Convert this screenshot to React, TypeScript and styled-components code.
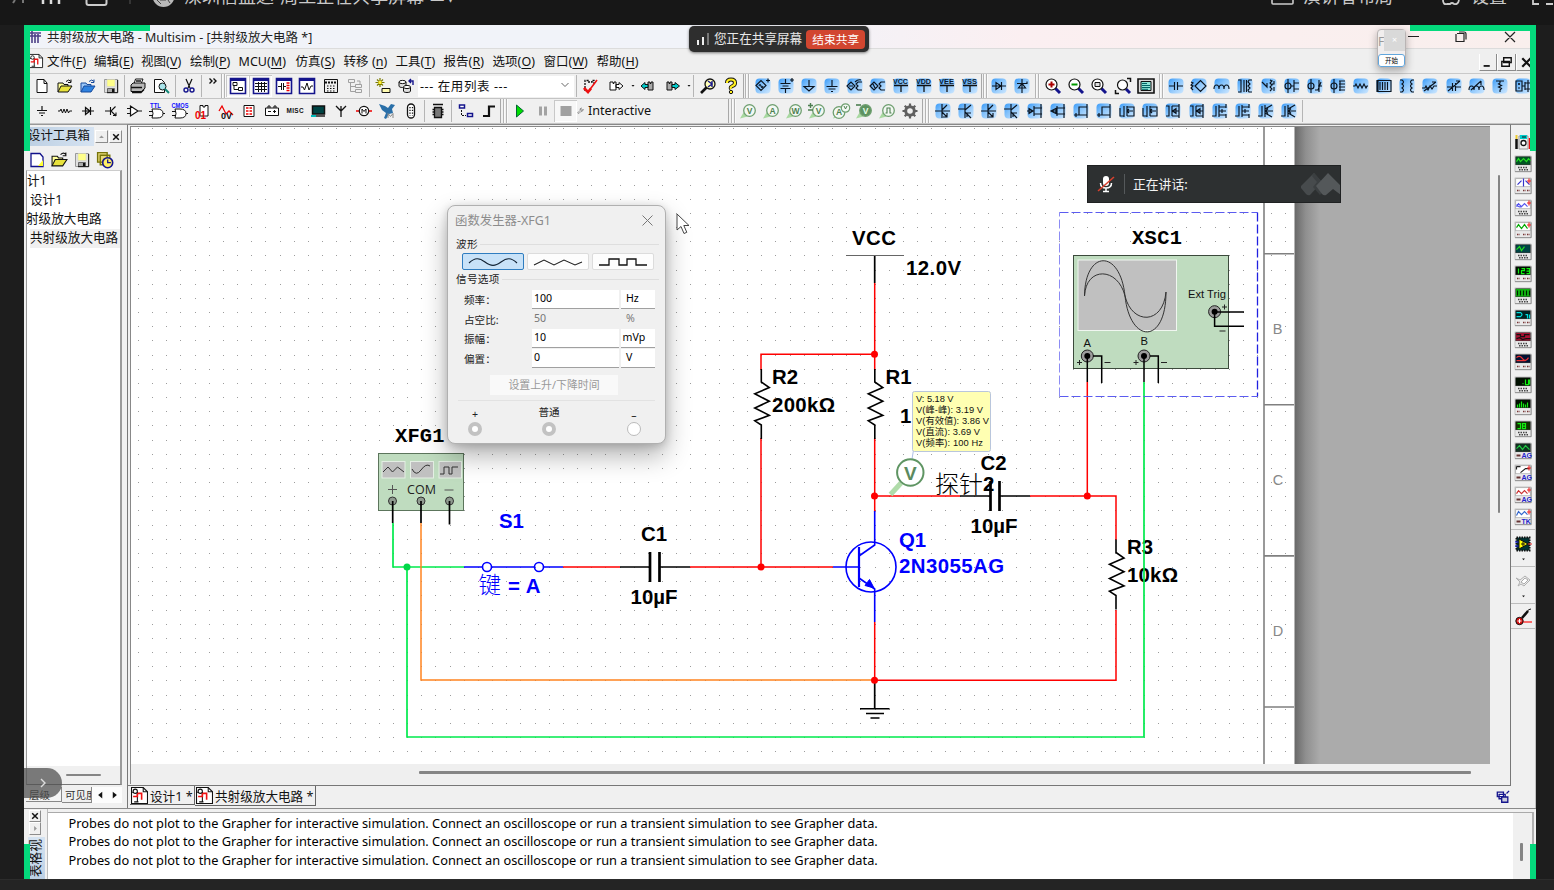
import React from 'react';
import styled, { createGlobalStyle, css } from 'styled-components';

const UI = `'Noto Sans', 'Noto Sans CJK SC', sans-serif`;

const Global = createGlobalStyle`
  * { box-sizing: border-box; }
  html, body { margin: 0; background: #1d1d1d; }
  body { width: 1554px; height: 890px; overflow: hidden; font-family: ${UI}; font-size: 12.5px; color: #111; }
`;

/* ---------- shell ---------- */

const Desktop = styled.div`
  position: relative;
  width: 1554px;
  height: 890px;
  display: flex;
  flex-direction: column;
  background: #1d1d1d;
  overflow: hidden;
`;
const MeetingBar = styled.div`
  height: 25px;
  flex: none;
  background: #171717;
  color: #c9c9c9;
  display: flex;
  align-items: flex-start;
  overflow: hidden;
  font-family: 'Noto Sans CJK SC', sans-serif;
  font-size: 18px;
  line-height: 26px;
  white-space: nowrap;
`;
const MeetingText = styled.span<{ $l: number; $w: number }>`
  margin: -18px 0 0 ${p => p.$l}px;
  width: ${p => p.$w}px;
`;
const MeetingArt = styled.svg<{ $l: number }>`
  flex: none;
  margin-left: ${p => p.$l}px;
  display: block;
`;
const Frame = styled.div`
  width: 1512px;
  height: 854px;
  margin-left: 24px;
  flex: none;
  display: flex;
  flex-direction: column;
  background: #f0f0f0;
  overflow: hidden;
`;
const Footer = styled.div`
  flex: 1;
  background: #242424;
  border-top: 1px solid #2c2c2c;
`;
const Corner = styled.i<{ $x: number; $y: number; $w: number; $h: number }>`
  position: absolute;
  left: ${p => p.$x}px;
  top: ${p => p.$y}px;
  width: ${p => p.$w}px;
  height: ${p => p.$h}px;
  background: #04d97c;
  z-index: 5;
`;

/* ---------- title and menu ---------- */

const TitleBar = styled.div`
  height: 24px;
  flex: none;
  display: flex;
  align-items: center;
  padding-left: 5px;
  background: linear-gradient(90deg, #f1f3f9 0%, #f1f3f9 50%, #fbeff1 66%, #f9efed 100%);
  border-bottom: 1px solid #dcdcdc;
`;
const TitleText = styled.span`
  flex: none;
  margin-left: 6px;
  padding-top: 2px;
  color: #222;
  font-size: 12.5px;
  line-height: 18px;
  width: 1323px;
  white-space: pre;
`;
const TitleButtons = styled.svg`
  display: block;
  flex: none;
`;
const MenuBar = styled.div`
  height: 25px;
  flex: none;
  display: flex;
  align-items: center;
  padding-left: 5px;
  background: #efefef;
  border-bottom: 1px solid #c9c9c9;
`;
const MenuItem = styled.span<{ $w: number }>`
  width: ${p => p.$w}px;
  padding-top: 2px;
  white-space: nowrap;
  line-height: 18px;
  letter-spacing: 0.05px;
  u { text-underline-offset: 2px; text-decoration-thickness: 1px; }
`;
const MenuSpacer = styled.div`flex: 1;`;
const MdiButton = styled.div<{ $w: number }>`
  width: ${p => p.$w}px;
  height: 17px;
  margin-top: 3px;
  border-right: 1px solid #8a8a8a;
  border-bottom: 1px solid #8a8a8a;
  border-left: 1px solid #fff;
  display: flex;
  align-items: center;
  justify-content: center;
`;

/* ---------- toolbars ---------- */

const ToolRow = styled.div`
  height: 25px;
  flex: none;
  display: flex;
  align-items: center;
  padding-left: 6px;
  background: #f0f0f0;
  border-bottom: 1px solid #c4c4c4;
  overflow: hidden;
`;
const ToolGroup = styled.div<{ $w: number }>`
  width: ${p => p.$w}px;
  height: 100%;
  flex: none;
  display: flex;
`;
const ToolCell = styled.div<{ $on?: boolean }>`
  flex: 1 1 0;
  min-width: 0;
  display: flex;
  align-items: center;
  justify-content: center;
  ${p => p.$on && css`
    background: #f7f7f7;
    box-shadow: inset 1px 1px #c8c8c8, inset -1px -1px #fff;
    margin: 1px 0;
  `}
`;
const Divider = styled.div<{ $w: number }>`
  width: ${p => p.$w}px;
  height: 22px;
  flex: none;
  background: linear-gradient(#b5b5b5, #b5b5b5) center / 1px 100% no-repeat;
`;
const Grip = styled.div<{ $w: number; $edge?: boolean }>`
  width: ${p => p.$w}px;
  height: 100%;
  flex: none;
  display: flex;
  justify-content: center;
  gap: 2px;
  &::before, &::after {
    content: '';
    width: 1px;
    height: 100%;
    background: #b4b4b4;
    box-shadow: 1px 0 #fafafa;
  }
  ${p => p.$edge && css`border-left: 1px solid #a8a8a8;`}
`;
const Combo = styled.div`
  width: 156px;
  height: 21px;
  flex: none;
  background: #fff;
  display: flex;
  align-items: center;
  justify-content: space-between;
  padding: 0 5px 2px 2px;
  font-size: 12.5px;
  letter-spacing: 0.6px;
  color: #111;
`;
const RunLabel = styled.span`
  width: 141px;
  font-size: 12.6px;
  line-height: 18px;
  padding-left: 1px;
`;
const Glyph = styled.svg`
  display: block;
  flex: none;
  overflow: visible;
`;

/* ---------- work area ---------- */

const Work = styled.div`
  height: 684px;
  flex: none;
  display: flex;
`;
const Side = styled.div`
  width: 104px;
  height: 684px;
  display: flex;
  flex-direction: column;
  padding: 2px 5px 0 2px;
  border-top: 1px solid #999;
  border-right: 1px solid #777;
  background: #f0f0f0;
`;
const SideHead = styled.div`
  height: 19px;
  display: flex;
  align-items: center;
  gap: 1px;
`;
const SideTitle = styled.div`
  width: 69px;
  height: 19px;
  padding-left: 2px;
  line-height: 18px;
  font-size: 12.4px;
  white-space: nowrap;
  background: linear-gradient(90deg, #bccfe2, #d6e3f2);
`;
const SmallButton = styled.div<{ $w?: number; $h?: number }>`
  width: ${p => p.$w ?? 13}px;
  height: ${p => p.$h ?? 13}px;
  display: flex;
  align-items: center;
  justify-content: center;
  border: 1px solid #fff;
  border-right-color: #8c8c8c;
  border-bottom-color: #8c8c8c;
`;
const SideTools = styled.div`
  height: 24px;
  display: flex;
  align-items: center;
  gap: 6px;
  padding: 3px 0 0 3px;
`;
const Tree = styled.div`
  height: 596px;
  width: 96px;
  padding-top: 1px;
  background: #fff;
  border-left: 1px solid #999;
  border-top: 1px solid #ccc;
  border-right: 2px solid #9a9a9a;
  overflow: hidden;
`;
const TreeRow = styled.div<{ $in: number; $sel?: boolean }>`
  height: 19px;
  line-height: 18px;
  margin-left: ${p => p.$in}px;
  font-size: 12.6px;
  white-space: nowrap;
  background: ${p => (p.$sel ? '#f0f0f0' : 'transparent')};
`;
const SideScroll = styled.div`
  height: 19px;
  width: 96px;
  border-right: 2px solid #9a9a9a;
  border-bottom: 1px solid #777;
  border-left: 1px solid #999;
  display: flex;
  align-items: center;
  padding-left: 39px;
`;
const Thumb = styled.i<{ $w: number; $h: number }>`
  display: block;
  width: ${p => p.$w}px;
  height: ${p => p.$h}px;
  border-radius: 1px;
  background: #858585;
`;
const SideTabs = styled.div`
  height: 20px;
  padding-top: 2px;
  display: flex;
  font-size: 10.5px;
  line-height: 17px;
  color: #333;
`;
const SideTab = styled.div<{ $w: number; $front?: boolean }>`
  width: ${p => p.$w}px;
  height: ${p => (p.$front ? 16 : 15)}px;
  padding-left: ${p => (p.$front ? 3 : 3)}px;
  overflow: hidden;
  white-space: nowrap;
  border-right: 1px solid #888;
  border-bottom: 1px solid #888;
  background: ${p => (p.$front ? '#f0f0f0' : '#f4f4f4')};
`;
const Scroller = styled.div`
  width: 15px;
  height: 16px;
  display: flex;
  align-items: center;
  justify-content: center;
  background: #fcfcfc;
`;

const Center = styled.div`
  width: 1383px;
  display: flex;
  flex-direction: column;
`;
const SheetFrame = styled.div`
  height: 662px;
  border-top: 1px solid #888;
  border-right: 1px solid #777;
  border-bottom: 1px solid #777;
  padding: 1px 2px 2px 2px;
  display: flex;
`;
const SheetInner = styled.div`
  width: 1361px;
  height: 658px;
  border-left: 1px solid #888;
  border-top: 1px solid #888;
  display: flex;
  flex-direction: column;
`;
const HScroll = styled.div`
  height: 20px;
  padding: 7px 0 0 288px;
  background: #efefef;
`;
const VScroll = styled.div`
  width: 19px;
  padding: 49px 0 0 8px;
`;
const DocTabs = styled.div`
  flex: 1;
  display: flex;
  padding-left: 2px;
`;
const DocTab = styled.div<{ $w: number; $front?: boolean }>`
  width: ${p => p.$w}px;
  height: ${p => (p.$front ? 20 : 19)}px;
  display: flex;
  align-items: center;
  gap: 2px;
  padding-left: 1px;
  border-right: 1px solid #666;
  border-bottom: 1px solid #666;
  white-space: pre;
  font-size: 12.6px;
`;
const TabsEnd = styled.div`
  flex: 1;
  display: flex;
  justify-content: flex-end;
  padding: 4px 1px 0 0;
`;

const Instruments = styled.div`
  width: 25px;
  border-top: 1px solid #888;
  border-right: 1px solid #c0c0c0;
  display: flex;
  flex-direction: column;
  align-items: center;
  padding: 6px 0 0;
`;
const InstrumentCell = styled.div<{ $h?: number; $line?: boolean; $top?: number }>`
  width: 24px;
  height: ${p => p.$h ?? 22.06}px;
  padding-top: ${p => p.$top ?? 0}px;
  flex: none;
  display: flex;
  flex-direction: column;
  align-items: center;
  justify-content: center;
  border-bottom: ${p => (p.$line ? '1px solid #bdbdbd' : '0')};
`;

/* ---------- output ---------- */

const Output = styled.div`
  flex: 1;
  display: flex;
  border-top: 1px solid #8a8a8a;
`;
const OutputSide = styled.div`
  width: 24px;
  padding: 1px 0 0 5px;
  border-right: 1px solid #bbb;
`;
const OutputCaption = styled.div`
  width: 17px;
  height: 43px;
  margin: 2px 0 0 -1px;
  padding-top: 3px;
  background: linear-gradient(#bccfe4, #d6e4f2);
  writing-mode: vertical-rl;
  text-orientation: sideways;
  transform: rotate(180deg);
  font-size: 12.6px;
  line-height: 15px;
  white-space: nowrap;
  overflow: hidden;
`;
const OutputList = styled.div`
  width: 1465px;
  margin-top: 3px;
  padding: 1px 0 0 20.5px;
  background: #fff;
  border-top: 1px solid #aaa;
`;
const OutputLine = styled.div`
  height: 18.4px;
  line-height: 18px;
  font-size: 12.8px;
  white-space: nowrap;
  color: #000;
`;
const OutputScroll = styled.div`
  flex: 1;
  margin: 3px 2px 0 0;
  border-top: 1px solid #aaa;
  border-right: 2px solid #b0b0b0;
  padding: 30px 0 0 7px;
`;

/* ---------- overlays ---------- */

const SharePill = styled.div`
  position: absolute;
  left: 689px;
  top: 26px;
  width: 180px;
  height: 26px;
  border-radius: 5px;
  background: #2e2e2e;
  box-shadow: 0 1px 3px rgba(0, 0, 0, .5);
  display: flex;
  align-items: center;
  padding: 0 4px 0 7px;
  color: #e8e8e8;
  font-family: 'Noto Sans CJK SC', sans-serif;
  font-size: 12.6px;
  white-space: nowrap;
`;
const ShareText = styled.span`
  width: 93px;
  margin-left: 4px;
  padding-bottom: 3px;
`;
const StopShare = styled.div`
  width: 59px;
  height: 19px;
  border-radius: 4px;
  background: #d24630;
  color: #fff;
  font-size: 11.7px;
  line-height: 17px;
  text-align: center;
`;
const FloatCard = styled.div`
  position: absolute;
  left: 1377px;
  top: 29px;
  width: 29px;
  height: 39px;
  border: 1px solid #b9b4b4;
  border-radius: 4px;
  background: #f1eeee;
  box-shadow: 0 3px 8px rgba(0, 0, 0, .3);
  display: flex;
  flex-direction: column;
  justify-content: space-between;
`;
const FloatTop = styled.div`
  display: flex;
  justify-content: space-between;
  font-size: 12px;
  line-height: 23px;
  color: #999;
  b { width: 21px; height: 21px; background: #d9d9d9; color: #fff; line-height: 20px; text-align: center; font-weight: 400; font-size: 9px; }
`;
const FloatButton = styled.div`
  height: 13px;
  border: 1px solid #62a6dc;
  border-radius: 3px;
  background: #fff;
  font-size: 6.5px;
  line-height: 11px;
  text-align: center;
  color: #000;
`;
const Talking = styled.div`
  position: absolute;
  left: 1087px;
  top: 165px;
  width: 254px;
  height: 38px;
  background: #2d3031;
  border: 1px solid #1f2122;
  display: flex;
  align-items: center;
  color: #f2f2f2;
  font-family: 'Noto Sans CJK SC', sans-serif;
  font-size: 12.8px;
  overflow: hidden;
`;
const TalkMic = styled.div`
  width: 37px;
  height: 20px;
  border-right: 1px solid #55595b;
  padding-left: 9px;
`;
const TalkText = styled.span`
  width: 175px;
  padding: 0 0 2px 8px;
`;
const ExpandPill = styled.div`
  position: absolute;
  left: 24px;
  top: 768px;
  width: 38px;
  height: 30px;
  border-radius: 0 15px 15px 0;
  background: rgba(80, 80, 80, .74);
  display: flex;
  align-items: center;
  justify-content: center;
`;

/* ---------- function generator ---------- */

const Dialog = styled.div`
  position: absolute;
  left: 447px;
  top: 205px;
  width: 219px;
  height: 239px;
  border: 1px solid #b0b0b0;
  border-radius: 8px;
  background: #f0f0f0;
  box-shadow: 0 12px 26px rgba(0, 0, 0, .3), 0 2px 8px rgba(0, 0, 0, .16);
  font-size: 10.6px;
  color: #222;
`;
const DialogHead = styled.div`
  height: 30px;
  display: flex;
  align-items: center;
  justify-content: space-between;
  padding: 0 12px 2px 7px;
  font-size: 12.4px;
  color: #8c8c8c;
`;
const Legend = styled.div<{ $h: number }>`
  height: ${p => p.$h}px;
  line-height: ${p => p.$h}px;
  margin: 0 6px;
  padding-left: 2px;
  display: flex;
  align-items: center;
  gap: 2px;
  letter-spacing: 0.3px;
  &::after { content: ''; flex: 1; height: 1px; background: #dedede; }
`;
const Waves = styled.div`
  height: 18px;
  display: flex;
  gap: 3px;
  padding-left: 14px;
`;
const WaveButton = styled.div<{ $on?: boolean }>`
  width: 62px;
  height: 17px;
  border-radius: 2px;
  border: 1px solid ${p => (p.$on ? '#2f7dc0' : '#dcdcdc')};
  background: ${p => (p.$on ? '#c8e2f8' : '#fdfdfd')};
  display: flex;
  align-items: center;
  justify-content: center;
`;
const Field = styled.div`
  height: 19.7px;
  display: flex;
  padding-left: 16px;
`;
const FieldName = styled.span`
  width: 68px;
  padding-top: 4px;
  line-height: 17px;
`;
const FieldBox = styled.span<{ $w: number; $off?: boolean; $pad: number }>`
  width: ${p => p.$w}px;
  height: 18.7px;
  margin: 2px 2px 0 0;
  padding-left: ${p => p.$pad}px;
  line-height: 16px;
  background: ${p => (p.$off ? 'transparent' : '#fff')};
  border-bottom: 1px solid ${p => (p.$off ? 'transparent' : '#a0a0a0')};
  color: ${p => (p.$off ? '#777' : '#000')};
`;
const RiseButton = styled.div`
  width: 128px;
  height: 20px;
  margin: 8px 0 0 42px;
  background: #f9f9f9;
  color: #999;
  font-size: 10.9px;
  text-align: center;
  line-height: 19px;
`;
const Rule = styled.div`
  height: 1px;
  margin: 5px 10px 0;
  background: #e2e2e2;
`;
const Jacks = styled.div`
  display: flex;
  padding-left: 17px;
`;
const Jack = styled.div<{ $gap: number; $w: number; $drop: number }>`
  width: ${p => p.$w}px;
  margin-right: ${p => p.$gap}px;
  padding-top: ${p => p.$drop}px;
  display: flex;
  flex-direction: column;
  align-items: center;
  line-height: ${p => 20 - p.$drop}px;
`;
const JackHole = styled.i<{ $open?: boolean }>`
  width: 14px;
  height: 14px;
  margin-top: 1px;
  border-radius: 50%;
  background: #fff;
  border: ${p => (p.$open ? '1px solid #bbb' : '4.5px solid #c2c2c2')};
`;
const Pointer = styled.svg`
  position: absolute;
  left: 676px;
  top: 213px;
`;

/* ---------- icon set ---------- */

const K = '#111';
const N = '#14148c';

const art: Record<string, React.ReactNode> = {
  page: <path d="M3 1.500h7l3 3.500v9.500h-10zM10 1.500v4h3" fill="#fff" stroke={K} />,
  open: <><path d="M1 14V5h5l1 1.500h4V9" fill="#ffff9a" stroke={K} /><path d="M1 14l3-6h11l-4 6z" fill="#e8e23c" stroke={K} /><path d="M9 3.500q3-3 5 0m0-2v3h-3" stroke={K} fill="none" /></>,
  openBlue: <><path d="M1 14V5h5l1 1.500h4V9" fill="#9cc8f8" stroke="#174a9c" /><path d="M1 14l3-6h11l-4 6z" fill="#2f82e0" stroke="#174a9c" /><path d="M9 3.500q3-3 5 0m0-2v3h-3" stroke="#174a9c" fill="none" /></>,
  save: <><path d="M1.500 1.500h13v13h-13z" fill="#e0e0e0" stroke="#999" /><path d="M4 1.500h8v7H4z" fill="#ffff8a" stroke="#ccc" strokeWidth=".5" /><path d="M4.500 10.500h7v4h-7z" fill="#aaa" stroke="#666" /><path d="M9 11h2v3H9z" fill={K} /><path d="M14.700 2v12.700H4" stroke={K} fill="none" /></>,
  print: <><path d="M4 6l1.500-5H13l-2 5" fill="#fff" stroke={K} /><path d="M1 7l2-2h12v5l-3 3.500H1z" fill="#b8b8b8" stroke={K} /><path d="M1 9.500h11M2 14.500h9l3-3M6 3h5" stroke={K} fill="none" strokeWidth="1.300" /></>,
  preview: <><path d="M1.500 1.500h7l3 3v10h-10z" fill="#fff" stroke={K} /><circle cx="9.500" cy="8.500" r="3.500" fill="#a8e4ea" stroke={K} /><path d="M12 11l4 4" stroke="#187" strokeWidth="2" /></>,
  cut: <><path d="M5 1l4 9M11 1L7 10" stroke={K} fill="none" strokeWidth="1.200" /><circle cx="5" cy="12" r="2" fill="none" stroke={N} strokeWidth="1.400" /><circle cx="11" cy="12" r="2" fill="none" stroke={N} strokeWidth="1.400" /></>,
  more: <path d="M5.500.500l2.500 2.500-2.500 2.500M9.500.500L12 3 9.500 5.500" stroke={K} fill="none" strokeWidth="1.400" />,
  winTree: <><path d="M.5.5h15v15H.5z" fill="#fff" stroke={N} strokeWidth="1.600" /><path d="M.5 2h15" stroke={N} strokeWidth="2" /><path d="M3 4.500h4v3H3zM8.500 9.500h4v3h-4zM4 8v3.500h4" fill="none" stroke={K} /></>,
  winGrid: <><path d="M.5.5h15v15H.5z" fill="#fff" stroke={N} strokeWidth="1.600" /><path d="M.5 2h15" stroke={N} strokeWidth="2" /><path d="M2 5.500h12M2 8.500h12M2 11.500h12M5.500 4v10M8.500 4v10M11.500 4v10" stroke={K} /></>,
  winCap: <><path d="M.5.5h15v15H.5z" fill="#fff" stroke={N} strokeWidth="1.600" /><path d="M.5 2h15" stroke={N} strokeWidth="2" /><path d="M2 8.500h3M5.500 5v7M7.500 5v7M8 8.500h2" stroke={K} /><path d="M10.500 5h3M10.500 7.500h3M10.500 10h3M10.500 12.500h3" stroke="#e00" strokeWidth="1.300" /></>,
  winWave: <><path d="M.5.5h15v15H.5z" fill="#fff" stroke={N} strokeWidth="1.600" /><path d="M.5 2h15" stroke={N} strokeWidth="2" /><path d="M2 9h2l1.500 3L8 5l2 7 2-4h2" stroke={K} fill="none" /></>,
  calc: <><path d="M1.500 1.500h13v13h-13z" fill="#eee" stroke={K} /><path d="M2 4.500h12" stroke={K} strokeWidth="2" strokeDasharray="2 1" /><path d="M4 8h9M4 10.500h9M4 13h9" stroke={K} strokeDasharray="1.500 1.500" /></>,
  treeGrey: <path d="M1.500 1.500h6v3h-6zM3.500 5v8.500H8M3.500 8.500H8M8.500 6.500h6v3h-6zM8.500 11.500h6v3h-6zM10 3h3v3" fill="none" stroke="#a0a0a0" />,
  star: <><path d="M5 0v9M.5 4.500h9M2 1.500l6 6M8 1.500l-6 6" stroke="#7a7a00" strokeWidth="1.200" /><path d="M3.500 3h3v3h-3z" fill="#ffee33" /><path d="M7 10.500h8v4H7z" fill="#fffbb0" stroke={K} /></>,
  db: <><path d="M1 4v4c0 2 7 2 7 0V4M5.500 9v4c0 2 7 2 7 0V9" fill="#ddd" stroke={K} /><ellipse cx="4.500" cy="4" rx="3.500" ry="1.600" fill="#fff" stroke={K} /><ellipse cx="9" cy="9" rx="3.500" ry="1.600" fill="#fff" stroke={K} /><path d="M15 7V3h-4m2-2l-2 2 2 2" stroke={N} fill="none" strokeWidth="1.400" /></>,
  check: <><path d="M3 13V2.500h3V4h4V2.500h2V7" fill="none" stroke={K} strokeDasharray="2 1" strokeWidth="1.300" /><path d="M2 10l4 4L15 2" stroke="#e11" strokeWidth="1.600" fill="none" /><path d="M2 10l4 4 3-3.500" stroke="#e11" strokeWidth="2.600" fill="none" /></>,
  chipOut: <path d="M2 4h3v1.500h1V4h2v8H2zM8 6.500h3V4.500L15 8l-4 3.500V9.500H8z" fill="#fff" stroke={K} />,
  chipIn: <><path d="M9 4h2v1.500h1V4h2v8H9z" fill="#aaa" stroke={K} /><path d="M9 6.500H6V4.500L2 8l4 3.500V9.500h3z" fill="#0cc" stroke={K} /></>,
  chipFwd: <><path d="M2 4h2v1.500h1V4h2v8H2z" fill="#aaa" stroke={K} /><path d="M7 6.500h3V4.500L14.500 8 10 11.500V9.500H7z" fill="#0cc" stroke={K} /></>,
  dot: <path d="M6.500 7h3L8 8.800z" fill={K} />,
  find: <><path d="M1 15l6-6" stroke={K} strokeWidth="2.600" /><circle cx="10" cy="6" r="5" fill="#ffffb8" stroke={K} strokeWidth="1.300" /><path d="M8 3l4 3-4 3M12 3v6" stroke={N} fill="none" strokeWidth="1.400" /></>,
  help: <><path d="M4 5q0-3.500 4-3.500T12 5q0 2-2.500 3T8 11" fill="none" stroke={K} strokeWidth="4" /><path d="M4 5q0-3.500 4-3.500T12 5q0 2-2.500 3T8 11" fill="none" stroke="#ffef1e" strokeWidth="2.200" /><circle cx="8" cy="14" r="1.700" fill="#ffef1e" stroke={K} /></>,
  zoomIn: <><path d="M10 10l5 5" stroke={N} strokeWidth="3" /><circle cx="6.500" cy="6.500" r="5.500" fill="#fff" stroke={K} strokeWidth="1.200" /><path d="M3.500 6.500h6M6.500 3.500v6" stroke="#a00" strokeWidth="2" /></>,
  zoomOut: <><path d="M10 10l5 5" stroke={N} strokeWidth="3" /><circle cx="6.500" cy="6.500" r="5.500" fill="#fff" stroke={K} strokeWidth="1.200" /><path d="M3.500 6.500h6" stroke="#090" strokeWidth="2" /></>,
  zoomArea: <><path d="M10 10l5 5" stroke={N} strokeWidth="3" /><circle cx="6.500" cy="6.500" r="5.500" fill="#fff" stroke={K} strokeWidth="1.200" /><path d="M4 4.500h5v4H4z" fill="#ddd" stroke={K} /></>,
  zoomFit: <><path d="M11 11l4 4" stroke={N} strokeWidth="3" /><circle cx="7.500" cy="7" r="5" fill="#fff" stroke={K} strokeWidth="1.200" /><path d="M12 .5h3.500V4M.5 12v3.500H4" fill="none" stroke={K} strokeWidth="1.500" /></>,
  fullPage: <><path d="M0 1h16v14H0z" fill="#ddd" stroke={K} strokeWidth="1.600" /><path d="M3 3.500h10v9H3z" fill="#8fe6d8" stroke={K} /><path d="M4 5.500h5M4 7.500h8M4 9.500h8M4 11.300h6" stroke="#066" /></>,
  gnd: <path d="M8 3v4M3 7.500h10M5 10h6M7 12.500h2" stroke={K} fill="none" strokeWidth="1.200" />,
  res: <path d="M1 8h2l1-2 1.500 4L7 6l1.500 4L10 6l1.500 4L12.500 8H15" stroke={K} fill="none" />,
  diode: <path d="M2 8h12M5.500 4.500v7L10 8zM10.500 4v8" stroke={K} fill="#ccc" strokeWidth="1.200" />,
  bjt: <path d="M2 8h5M7.500 4v8M12.500 3.500L8 8l5 5M10 12.500h3v-3" stroke={K} fill="none" strokeWidth="1.100" />,
  opamp: <path d="M1 5.500h3M1 10.500h3M4.500 3v10L12 8zM12 8h4" stroke={K} fill="#fff" strokeWidth="1.200" />,
  ttl: <><path d="M3 6h5q6 0 6 4.500T8 15H3q2-4.500 0-9zM0 8.500h4M0 12.500h4M14 10.500h2" stroke={K} fill="#fff" /><text x="1" y="5" fontSize="7" fontWeight="700" fill="#11f" fontFamily="Liberation Sans" textLength="11" lengthAdjust="spacingAndGlyphs">TTL</text></>,
  cmos: <><path d="M3 6h5q6 0 6 4.500T8 15H3q2-4.500 0-9zM0 8.500h4M0 12.500h4M14 10.500h2" stroke={K} fill="#fff" /><text x="-.5" y="5" fontSize="7" fontWeight="700" fill="#11f" fontFamily="Liberation Sans" textLength="17" lengthAdjust="spacingAndGlyphs">CMOS</text></>,
  dig: <><path d="M5 13V2.500h3V4h2V2.500h3V13z" stroke={K} fill="#fff" /><text x="0" y="15.500" fontSize="10" fontWeight="700" fill="#e00" fontFamily="Liberation Sans">01</text></>,
  mixed: <><path d="M1 8l3-5 4 8 3-3 4 4" stroke="#e00" fill="none" strokeWidth="1.300" /><text x="3" y="15.500" fontSize="9" fontWeight="700" fill={K} fontFamily="Liberation Sans">0V</text></>,
  ind: <><path d="M3 2.500h10v11H3z" stroke={K} fill="#fff" /><path d="M5 5h2.500M8.500 5H11M5 8h2.500M8.500 8H11M5 11h2.500M8.500 11H11" stroke="#e00" strokeWidth="1.400" /></>,
  power: <path d="M1.500 5h13v7.500h-13zM4 5V3h2v2M10 5V3h2v2M4 8.500h3M9 8.500h3M10.500 7v3" stroke={K} fill="#fff" />,
  misc: <text x="-.5" y="10" fontSize="6.400" fontWeight="700" fill={K} fontFamily="Liberation Sans" textLength="17">MISC</text>,
  periph: <><path d="M2.500 3h12v8h-12z" fill="#044" stroke={K} strokeWidth="1.500" /><path d="M1 13h14" stroke="#555" strokeWidth="2" /><path d="M1 13h5" stroke="#0bb" strokeWidth="2" /></>,
  rf: <path d="M8 14V3M3 3l5 5 5-5" stroke={K} fill="none" strokeWidth="1.300" />,
  motor: <><path d="M0 8h3M13 8h3" stroke="#e00" strokeWidth="1.500" /><circle cx="8" cy="8" r="4.700" fill="#fff" stroke={K} strokeWidth="1.200" /><path d="M6 10.500V6l2 2.500L10 6v4.500" stroke={K} fill="none" /></>,
  eagle: <><path d="M0 1l6 2 3 2 3-4 4 1-3 4 1 4-4 1-3 5-2-1 2-5-4-3z" fill="#2a6fa8" /><path d="M9 15v-4.500l2.500 3 2.500-3V15" stroke="#888" fill="none" /></>,
  conn: <><rect x="4.500" y="1" width="7" height="14" rx="3.500" fill="#fff" stroke={K} strokeWidth="1.300" /><path d="M7 4v9M9.500 4v9" stroke={K} strokeDasharray="1.200 1.600" strokeWidth="1.300" /></>,
  mcu: <><path d="M4.500 4.500h7v10h-7z" fill="#777" stroke={K} strokeWidth="1.300" /><path d="M2.500 6.500h2M2.500 9h2M2.500 11.500h2M11.500 6.500h2M11.500 9h2M11.500 11.500h2M3 1.500h10" stroke={K} strokeWidth="1.500" /></>,
  hier: <><path d="M1.500 2h5v3h-5zM9.500 10.500h5v3h-5z" fill="#fff" stroke={N} strokeWidth="1.500" /><path d="M3.500 7v5.500H8" stroke={K} strokeDasharray="2 1" fill="none" /></>,
  bus: <path d="M2 13h6V3.500h6" stroke={K} fill="none" strokeWidth="2.200" />,
  play: <path d="M4.500 2v12L11.500 8z" fill="#0d0" stroke="#063" />,
  pause: <path d="M4 3.500h3v9H4zM9 3.500h3v9H9z" fill="#a3a3a3" />,
  stop: <path d="M2.500 3h11v10h-11z" fill="#a0a0a0" />,
  wrench: <path d="M1 11l4-4q-1-3 2-4L6 6l2 1 2-2q0 4-4 4l-3 3z" fill="#eee" stroke="#555" strokeWidth=".9" />,
  gear: <><circle cx="8" cy="8" r="4.300" fill="none" stroke="#606060" strokeWidth="3" /><path d="M8 .5v15M.5 8h15M2.700 2.700l10.600 10.600M13.300 2.700L2.700 13.300" stroke="#606060" strokeWidth="2.200" strokeDasharray="3 9 3 0" /><circle cx="8" cy="8" r="2.200" fill="#f0f0f0" /></>,
  redProbe: <><path d="M16 0q-3 0-4 3" stroke={K} fill="none" /><path d="M13 2L7 9" stroke={K} strokeWidth="2.600" /><path d="M8 13h9" stroke="#f22" strokeWidth="1.300" /><circle cx="4.500" cy="12" r="3.700" fill="#d11" stroke={K} /><path d="M2.500 12h4M4.500 10v4" stroke="#fff" /></>,
  greyTool: <><path d="M1 5l4 2 5-4 5 4-6 6-3-2-3 2 2-4z" fill="#ececec" stroke="#b0b0b0" /><path d="M6 9l4-4 3 2-4 4z" fill="#fff" stroke="#aaa" /></>,
  labview: <><path d="M1.500 1.500h13v13h-13z" fill="#033" stroke={K} strokeWidth="2" strokeDasharray="1.500 1" /><path d="M0 6h4M0 10h4" stroke="#22f" /><path d="M13 8h4" stroke="#e22" /><path d="M4 3v10l9-5z" fill="#ff0" stroke={K} /><path d="M6 8h4M8 6v4" stroke={K} /></>,
  cascade: <><path d="M1.500 2.500h7v5h-7zM3.500 5h7v5h-7z" fill="#fff" stroke={N} strokeWidth="1.500" /><path d="M6.500 8h7v6h-7z" fill="#ccd" stroke={N} strokeWidth="1.500" /><path d="M15 1l-3 3" stroke={N} strokeWidth="1.500" /></>,
  docs: <><path d="M1.500 1.500h9v9h-9zM4 4h9v9H4z" fill="#e9dc7a" stroke="#77730a" strokeWidth="1.300" /><circle cx="11" cy="11" r="4.700" fill="#ffef66" stroke={N} strokeWidth="1.500" /><path d="M11 8v3h3" stroke={N} fill="none" strokeWidth="1.200" /></>,
  pageYellow: <><path d="M2 1.500h9l3 3.500v9.500H2z" fill="#fff" stroke="#11118a" strokeWidth="1.300" /><path d="M9 14h5V8z" fill="#ff3" /></>,
  schem: <><path d="M.5.5h11l4 4v11H.5z" fill="#fff" stroke={K} /><path d="M11.500.5v4h4M1 5h5v9M3 14h4" fill="none" stroke={K} /><path d="M2 9h4V6h4v6" fill="none" stroke="#e11" strokeWidth="1.500" /><circle cx="4" cy="4" r="2" fill="#fff" stroke={K} /></>,
  min: <path d="M3 12.500h7" stroke={K} strokeWidth="2" />,
  restore: <path d="M5 3h8v5H5zM3 7h8v5H3z" fill="#fff" stroke={K} strokeWidth="1.500" />,
  close: <path d="M3.500 3.500l9 9M12.500 3.500l-9 9" stroke={K} strokeWidth="2.400" />,
  up: <path d="M4.500 10L8 6.500 11.500 10z" fill="#999" />,
  left: <path d="M11 3.500v9L5.500 8z" fill={K} />,
  right: <path d="M5 3.500v9L10.500 8z" fill={K} />,
  rightGrey: <path d="M6 4.500v7L10 8z" fill="#999" />,
  // outlines laid over the blue component tiles
  acSrc: <path d="M1 7.500l5-5 5 5-5 5zM11 2.500h4M13 .5v4M4 8q1-3 2 0t2 0" />,
  dcSrc: <path d="M7.500 1v4M2.500 5.500h10M4.500 8h6M2.500 10.500h10M7.500 11v4M12 2h4M14 0v4" />,
  gndA: <path d="M8 2v6M3 8.500h10L8 13z" />,
  gndD: <path d="M8 2v6M2.500 8.500h11M4.500 11h7M7 13.500h2" />,
  ctl: <path d="M0 8l4-4 4 4-4 4zM2 8h4M15 4h-4l-2 2 2 2-2 2 2 2h4M8 4q3-3 6-2" />,
  ctl2: <path d="M0 8l4-4 4 4-4 4zM3 6l2 4M15 4h-4l-2 2 2 2-2 2 2 2h4" />,
  dioH: <path d="M1 8h14M5 4.500v7L10 8zM10.500 4v8" />,
  dioV: <path d="M8 1v14M4.500 10h7L8 5.500zM3 5.500h10v-2" />,
  cap: <path d="M1 8h5M6.500 4v8M9.500 4v8M10 8h5" />,
  dia: <path d="M0 4l2 1-2 2 2 1-2 2 2 2M4 8l5.500-5.500L15 8l-5.500 5.500z" />,
  coil: <path d="M0 11q0-4 2.500-4T5 11q0-4 2.500-4T10 11q0-4 2.500-4T15 11" />,
  trafo: <path d="M1 2h3v12H1M7 2v12M9.500 2v12M15 2h-3l-1 2 2 2-2 2 2 2-2 2 1 2h3" />,
  relay: <path d="M1 4l5 5V5M9 2l2 1-2 2 2 2-2 2 2 2-2 2M13 3v3h-2M13 9v4" />,
  mot1: <><circle cx="4" cy="8" r="3" /><path d="M4 1v14M10 2v12M10 5h5M10 11h5M7 8h3" /></>,
  mot2: <><circle cx="4" cy="8" r="3" /><path d="M4 1v14M8 12h3L14 4M11 8h4M12 2v12" /></>,
  mot3: <><circle cx="4" cy="8" r="3" /><path d="M4 1v14M9 3h6M10 3v10M9 6h6M9 9h6M9 12h6" /></>,
  resB: <path d="M0 8h2l1-2 2 4 2-4 2 4 2-4 2 4 1-2h1" />,
  trafoBox: <path d="M1 2.500h14v11H1zM4 4v8M6.500 4v8M9 4v8M11.500 4v8M2 2.500v11" />,
  coupl: <path d="M1 2h2q3 2 0 4 3 2 0 4 3 2 0 4H1M15 2h-2q-3 2 0 4-3 2 0 4-3 2 0 4h2" />,
  varRes: <path d="M0 10h3l1-2 2 4 2-4 2 3 2-3h3M2 13L14 4M14 4h-4" />,
  varCap: <path d="M1 9h5M6.500 5v8M9.500 5v8M10 9h5M2 13L14 3M14 3h-4" />,
  varCoil: <path d="M0 12q0-4 2.500-4T5 12q0-4 2.500-4T10 12q0-4 2.500-4T15 12M2 12L12 3M12 3v4" />,
  pot: <path d="M4 3h8M8 3v2l-1.500 1 3 1.500-3 1.500 3 1.500L8 12v2" />,
  xtal: <path d="M1 3h6v10H1zM4 5v2M3 6h2M3 10h2M7 8h3M10 4v8M13 2v12M10 5h5M10 11h5" />,
  npn: <path d="M0 8h15M7 1v14M12 2L7 7M7 9l5 5M12 10v4H8" />,
  pnp: <path d="M0 6h7M7 1v14M13 2L7 7M7 9l6 6M9 14v-4h4" />,
  jfet: <path d="M0 8h6M7 3v10M7 5h8M7 11h8M14 1v14M2 5.500v5L6 8z" />,
  jfet2: <path d="M2 8h4M7 3v10M7 5h8M7 11h8M14 1v14M6 5.500v5L1 8z" />,
  mos: <path d="M1 12h5V4h8M14 1v14M6 12h8M3 10v4" />,
  mos2: <path d="M1 5v8h4M5 3v11M8 3v10M8 4h7v9H8M8 8h6M10 6L8 8l2 2" />,
  mos3: <path d="M1 3h3v10H1M7 3v10M7 8h7M14 3H7M14 13H7M11 5.500v5L7.500 8zM14 1v14" />,
  igbt: <path d="M0 13h4V3M7 2v12M7 4h7M7 8h7M7 12h7M14 1v4M14 11v4M10 6v4" />,
  igbt2: <path d="M0 13h4V3M7 2v12M7 8h8M14 2L7 6M14 14L7 10M10 5.500L7.500 8 10 10.500" />,
};

const tileText: Record<string, string> = { tVCC: 'VCC', tVDD: 'VDD', tVEE: 'VEE', tVSS: 'VSS' };

const Icon = ({ n, s = 16 }: { n: string; s?: number }) => (
  <Glyph width={s} height={s} viewBox="0 0 16 16">{art[n]}</Glyph>
);

const Tile = ({ n }: { n: string }) => (
  <Glyph width={16} height={16} viewBox="0 0 16 16">
    <rect x=".5" y=".5" width="15" height="15" rx="4" fill="url(#tile)" />
    {tileText[n] ? (
      <>
        <text x="0" y="5.500" fontSize="7.500" fontWeight="700" fontFamily="Liberation Sans" textLength="15" lengthAdjust="spacingAndGlyphs" fill="#0a1a30">{tileText[n]}</text>
        <path d="M1 7.500h14M8 8v6" stroke="#111" strokeWidth="1.300" />
      </>
    ) : (
      <g fill="none" stroke="#0a1420" strokeWidth="1.150">{art[n]}</g>
    )}
  </Glyph>
);

const ProbeIcon = ({ t }: { t: string }) => {
  const solid = t === '-V';
  const pair = t === 'AV';
  return (
    <Glyph width={17} height={16} viewBox="0 0 17 16">
      <path d="M0 15.500l3.500-6 4 4z" fill="#a8d8a0" />
      <circle cx={pair ? 6 : 9.500} cy={pair ? 9.500 : 7.500} r="5.800" fill={solid ? '#5d925f' : '#f3f8f3'} stroke="#6f9f70" strokeWidth="1.300" />
      {pair && <circle cx="12.500" cy="5" r="4.200" fill="#f3f8f3" stroke="#6f9f70" strokeWidth="1.200" />}
      {t === 'P' ? (
        <path d="M6.500 10h1.500v-5h3v5h1.500" fill="none" stroke="#4d7f50" strokeWidth="1.100" />
      ) : (
        <text x={pair ? 6 : 9.500} y={pair ? 12.400 : 10.500} textAnchor="middle" fontSize="8.500" fontWeight="700" fontFamily="Liberation Sans" fill={solid ? '#e8ffe8' : '#4d7f50'}>{t === 'W' || t === 'A' || pair ? t[0] : 'V'}</text>
      )}
      {pair && <path d="M11 3l1.500 3L14 3" stroke="#4d7f50" fill="none" />}
      {t === '+V' && <path d="M-1 2.500h5M1.500 0v5M-1 7h5" stroke="#4d7f50" strokeWidth="1.400" />}
      {t === '-V' && <path d="M0 2h5" stroke="#4d7f50" strokeWidth="1.600" />}
    </Glyph>
  );
};

const Cells = ({ w, items }: { w: number; items: string[] }) => (
  <ToolGroup $w={w}>
    {items.map((n, i) => <ToolCell key={i}><Icon n={n} /></ToolCell>)}
  </ToolGroup>
);
const Tiles = ({ w, items }: { w: number; items: string[] }) => (
  <ToolGroup $w={w}>
    {items.map((n, i) => <ToolCell key={i}><Tile n={n} /></ToolCell>)}
  </ToolGroup>
);

/* ---------- instrument icons ---------- */

type Meter = { screen: string; trace: string; line: string; tag?: string; white?: boolean };
const meters: Meter[] = [
  { screen: '#052', trace: '#2d2', line: 'M1 5l2-3 2 3 3-3 3 3 2-3 2 2' },
  { screen: '#fff', trace: '#33c', line: 'M2 6l4-4M10 2l4 4M8 0v8', white: true },
  { screen: '#fff', trace: '#55e', line: 'M1 6l2-3 3 3 3-3 3 3M1 4q3 4 6 1', white: true },
  { screen: '#fff', trace: '#0a0', line: 'M1 5l2-3 3 4 3-4 3 4', white: true },
  { screen: '#044', trace: '#2d2', line: 'M1 5l3-3 2 4 3-4' },
  { screen: '#010', trace: '#1e1', line: 'M3 2v5M6 2h3v2H6v3h3M11 2h3v5h-3M11 4.500h3' },
  { screen: '#1b1', trace: '#020', line: 'M2 2v5M5 2v5M8 2v5M11 2v5M14 2v5' },
  { screen: '#022', trace: '#0dd', line: 'M1 2h4q3 2 0 4H1M10 4h2v4M14 4v4' },
  { screen: '#a13', trace: '#111', line: 'M1 2h4v2h4V2h5M1 6l3-1 3 2 4-1h4' },
  { screen: '#013', trace: '#e33', line: 'M1 3q3-3 6 1t6-1M1 6h9' },
  { screen: '#010', trace: '#1e1', line: 'M7 6h1M10 2v5h3V2M14 2v5' },
  { screen: '#010', trace: '#1e1', line: 'M2 8V5M4 8V4M6 8V2M8 8V4M10 8V5M12 8V3' },
  { screen: '#130', trace: '#1e1', line: 'M2 2h3v5H2M7 2h3v5H7zM7 4.500h3' },
  { screen: '#132', trace: '#2c4', line: 'M1 5l3-3 3 4 3-4 4 4', tag: 'AG' },
  { screen: '#fff', trace: '#222', line: 'M1 1v3M1 1h4M5 7l5-4h4', tag: 'AG', white: true },
  { screen: '#fff', trace: '#c33', line: 'M1 6l2-3 3 3 3-3 3 3', tag: 'AG', white: true },
  { screen: '#fff', trace: '#36c', line: 'M1 6l2-4 3 3 3-3 3 3', tag: 'TK', white: true },
];

const MeterIcon = ({ m, seed }: { m: Meter; seed: number }) => (
  <Glyph width={17} height={16} viewBox="0 0 17 16">
    <rect x="0" y="0" width="16" height="15.500" fill="#e9e9e9" stroke="#aaa" strokeWidth=".6" />
    <path d="M16.200.5v15.200H0" fill="none" stroke="#777" strokeWidth=".7" />
    <rect x=".8" y=".8" width="14.400" height="8" fill={m.screen} stroke={m.white ? '#888' : '#111'} strokeWidth=".5" />
    <path d={m.line} fill="none" stroke={m.trace} strokeWidth="1.200" transform="translate(.5 .6)" />
    {m.white && <path d="M14 .5v5M12 3h4" stroke="#e22" strokeWidth="1.100" />}
    {m.tag ? (
      <>
        <path d="M1.500 12.500h4" stroke="#633" strokeWidth="2" />
        <text x="6.500" y="15" fontSize="7" fontWeight="700" fill="#22c" fontFamily="Liberation Sans">{m.tag}</text>
      </>
    ) : (
      <path d={seed % 2 ? 'M2 12.500h3M8 12.500h3M12 12.500h3' : 'M3 11.500h10M4 13.800h9'} stroke={seed % 2 ? '#733' : '#444'} strokeWidth="1.600" strokeDasharray="1.500 1" />
    )}
  </Glyph>
);

/* ---------- schematic ---------- */

const STEP = 14.165;
const gridDots = (() => {
  let d = '';
  for (let r = 0; r < 45; r++) {
    const y = Math.round(128 + r * STEP);
    for (let c = 0; c < 82; c++) d += `M${Math.round(138 + c * STEP)} ${y}h1`;
  }
  return d;
})();

const Sheet = styled.svg`
  display: block;
  flex: none;
  background: #ababab;
`;

const Zig = ({ x, y }: { x: number; y: number }) => (
  <path
    d={`M${x} ${y - 13}V${y}l8 5.500-14.500 6.300 14.500 7.500-14.500 6.700 14.500 7.300-14.500 5.500 6.500 4.200V${y + 57}`}
    fill="none" stroke="#000" strokeWidth="1.600"
  />
);

const BLUE = '#0000ff';
const Label = styled.text<{ $c?: string }>`
  font-family: 'Liberation Sans', 'Noto Sans CJK SC', sans-serif;
  font-weight: 700;
  font-size: 20.4px;
  fill: ${p => p.$c ?? '#000'};
`;
const MonoLabel = styled.text`
  font-family: 'Liberation Mono', monospace;
  font-weight: 700;
  font-size: 20.4px;
  fill: #000;
`;
const Zone = styled.text`
  font-family: 'Liberation Sans', sans-serif;
  font-size: 14.5px;
  fill: #888;
  text-anchor: middle;
`;
const Small = styled.text<{ $s: number }>`
  font-family: 'Liberation Sans', 'Noto Sans CJK SC', sans-serif;
  font-size: ${p => p.$s}px;
  fill: #111;
`;

const Terminal = ({ x, y }: { x: number; y: number }) => (
  <g>
    <circle cx={x} cy={y} r={6} fill="#9c9c9c" stroke="#222" />
    <circle cx={x} cy={y} r={3} fill="#000" />
  </g>
);

const Schematic = () => (
  <Sheet width={1359} height={637} viewBox="131 127 1359 637">
    <defs>
      <linearGradient id="edge" x1="0" x2="1">
        <stop offset="0" stopColor="#666" />
        <stop offset=".45" stopColor="#8f8f8f" />
        <stop offset="1" stopColor="#ababab" />
      </linearGradient>
    </defs>
    <rect x="1294" y="127" width="26" height="637" fill="url(#edge)" />
    <rect x="131" y="127" width="1163.500" height="637" fill="#fff" />
    <path d={gridDots} transform="translate(0 .5)" stroke="#9c9c9c" shapeRendering="crispEdges" />
    <path d="M1264 127V764M1264 253.700h30M1264 404.700h30M1264 555.900h30M1264 707h30" stroke="#808080" strokeWidth="1.600" />
    <rect x="1271" y="320" width="14" height="17" fill="#fff" />
    <Zone x="1277.500" y="334">B</Zone>
    <Zone x="1278" y="485">C</Zone>
    <Zone x="1278" y="636">D</Zone>

    {/* function generator block */}
    <rect x="378.500" y="453.500" width="85" height="57" fill="#bfdcbf" stroke="#5c755c" />
    <g fill="#c0c0c0" stroke="#e4efe4">
      <rect x="382" y="461.500" width="23" height="16.500" />
      <rect x="410.500" y="461.500" width="23" height="16.500" />
      <rect x="439" y="461.500" width="22.500" height="16.500" />
    </g>
    <path d="M383 472l5-5 4.500 5 5-5 6.500 5M412 469q4 8 9 1t9-4M440 474h4v-7h5v7h3v-7h6" fill="none" stroke="#333" />
    <path d="M388 489.500h9M392.500 485v9M444.500 490h9" stroke="#555" />
    <text x="407" y="493.500" fontFamily="Open Sans" fontSize="12.500" textLength="29" fill="#222">COM</text>
    <g fill="#8f9a8f" stroke="#333"><circle cx="392.500" cy="501" r="4" /><circle cx="421" cy="501" r="4" /><circle cx="449.500" cy="501" r="4" /></g>
    <path d="M392.700 501v22M421 501v22M449.500 501v23.500" stroke="#000" strokeWidth="1.700" />
    <MonoLabel x="395" y="442" textLength="49.500">XFG1</MonoLabel>
    <Label x="1127" y="553.500">R3</Label>
    <Label x="1127" y="582" textLength="51">10kΩ</Label>

    {/* nets */}
    <g fill="none" strokeWidth="1.500">
      <path d="M393 523V567H464M407 567V737H1144V382" stroke="#00ea4c" strokeWidth="1.700" />
      <path d="M421 523V680H874" stroke="#ff8420" />
      <g stroke="#f00">
        <path d="M874.700 283V370M761 370V354.300H874M761 438V567M690 567H833M563 567H620M874.700 438V512M874 496H960M1030 496H1116V540M1087.300 382V496M1116 610V680.300H874.700V622" />
      </g>
      <g stroke={BLUE} strokeWidth="1.600">
        <path d="M464 567H483M491 567H535M543 567H563M833 567H859M874.700 511V545L859 556M859 578L874.700 589V622" />
        <circle cx="487" cy="567" r="4.500" /><circle cx="539" cy="567" r="4.500" />
        <circle cx="871" cy="567" r="25" />
        <path d="M859 547V587" strokeWidth="2.200" />
        <path d="M874 588l-9-2.500 4.500-6z" fill={BLUE} strokeWidth="1" />
      </g>
    </g>
    <path d="M874.700 255V283M620 567H650M660 567H690M960 496H990M1000 496H1030M874.700 680V709" stroke="#000" strokeWidth="1.700" />
    <path d="M846 255.500H904" stroke="#666" />
    <path d="M650 552V582M659.500 552V582M990.500 481V511M999.500 481V511" stroke="#000" strokeWidth="2.700" />
    <path d="M860 708.800H889.500M866 713.500H884M870.500 718H879.500" stroke="#000" strokeWidth="1.500" />
    <Zig x={761.3} y={382} />
    <Zig x={874.8} y={382} />
    <Zig x={1116} y={552.5} />
    <g fill="#f00">
      <circle cx="874.500" cy="354.300" r="3.500" /><circle cx="761" cy="567" r="3.500" /><circle cx="874.500" cy="496" r="3.500" />
      <circle cx="1087.300" cy="496" r="3.500" /><circle cx="874.500" cy="680.300" r="3.500" />
    </g>
    <circle cx="407" cy="567" r="3.500" fill="#00d848" />

    <Label x="852" y="244.500" textLength="44">VCC</Label>
    <Label x="906" y="275" textLength="55">12.0V</Label>
    <Label x="772" y="383.500">R2</Label>
    <Label x="772" y="412" textLength="63">200kΩ</Label>
    <Label x="885.500" y="383.500">R1</Label>
    <Label x="900" y="423">1</Label>
    <Label x="641" y="541">C1</Label>
    <Label x="630.500" y="604" textLength="47">10µF</Label>
    <Label x="980.500" y="470">C2</Label>
    <Label x="970.500" y="533" textLength="47">10µF</Label>
    <Label x="499" y="528" $c={BLUE}>S1</Label>
    <Label x="899" y="547" $c={BLUE}>Q1</Label>
    <Label x="899" y="572.500" $c={BLUE} textLength="105">2N3055AG</Label>
    <Label x="508" y="593" $c={BLUE} textLength="32.500">= A</Label>
    <text x="478.500" y="593" fontFamily="Noto Sans CJK SC" fontSize="22.500" fontWeight="300" fill={BLUE}>键</text>
    <text x="935" y="493" fontFamily="Noto Sans CJK SC" fontSize="24" fontWeight="300" fill="#000">探针</text>
    <Label x="983" y="491">2</Label>

    {/* voltage probe */}
    <path d="M913.500 450L912 459" stroke="#b0c0e8" />
    <path d="M890.500 494.500L901 483" stroke="#b0dcaa" strokeWidth="5" />
    <circle cx="910.300" cy="472.500" r="13.200" fill="#fff" stroke="#5f9563" strokeWidth="2" />
    <text x="910.300" y="479.500" textAnchor="middle" fontFamily="Liberation Sans" fontWeight="700" fontSize="19" fill="#5b8a5e">V</text>
    <rect x="912.500" y="391.500" width="78" height="60" rx="2" fill="#ffffb2" stroke="#b9c6dc" />
    <Small $s={9.3} x="916" y="402" textLength="37.500">V: 5.18 V</Small>
    <Small $s={9.3} x="916" y="413" textLength="67">V(峰-峰): 3.19 V</Small>
    <Small $s={9.3} x="916" y="424" textLength="73">V(有效值): 3.86 V</Small>
    <Small $s={9.3} x="916" y="435" textLength="64">V(直流): 3.69 V</Small>
    <Small $s={9.3} x="916" y="446" textLength="67">V(频率): 100 Hz</Small>

    {/* oscilloscope */}
    <path d="M1059.500 396.500V212.500" fill="none" stroke="#8c8cf4" strokeDasharray="9 3" />
    <path d="M1059.500 212.500H1257.500M1059.500 396.500H1257.500" fill="none" stroke="#5c5cf0" strokeDasharray="9 3" />
    <path d="M1257.500 212.500V396.500" stroke="#2020e0" strokeDasharray="9 3" strokeWidth="1.300" />
    <MonoLabel x="1132" y="243.500" textLength="50">XSC1</MonoLabel>
    <rect x="1073.500" y="255.500" width="155" height="113" fill="#bfdcbf" stroke="#3c4a3c" />
    <rect x="1078" y="260" width="98.500" height="70.500" fill="#c0c0c0" stroke="#f0f6f0" />
    <path d="M1084.500 296C1085 250 1120 248 1125 296S1166 345 1166 292" fill="none" stroke="#333" />
    <path d="M1084.500 296C1086 266 1118 267 1125 296S1163 325 1166 292" fill="none" stroke="#333" />
    <Small $s={11.2} x="1188" y="298" textLength="38">Ext Trig</Small>
    <Small $s={11.2} x="1083.500" y="346.500">A</Small>
    <Small $s={11.2} x="1140.500" y="345">B</Small>
    <Terminal x={1087.3} y={356} />
    <Terminal x={1144} y={356} />
    <Terminal x={1214.6} y={311.7} />
    <path d="M1087.300 356V382M1144 356V382M1093 356H1101.700V383M1150 356H1158.300V383M1214.600 312H1244M1214.600 312V326.300H1244" fill="none" stroke="#000" strokeWidth="1.500" />
    <path d="M1077 362.500h5M1079.500 360v5M1104.500 362.500h6M1133.500 362.500h5M1136 360v5M1161 362.500h6M1222 307h5M1224.500 304.500v5M1219.500 331h6" stroke="#222" />
  </Sheet>
);

/* ---------- page ---------- */

const menus: [string, string, string, number][] = [
  ['文件(', 'F', ')', 47], ['编辑(', 'E', ')', 47], ['视图(', 'V', ')', 49], ['绘制(', 'P', ')', 48.5],
  ['MCU(', 'M', ')', 57], ['仿真(', 'S', ')', 48], ['转移 (', 'n', ')', 52], ['工具(', 'T', ')', 48],
  ['报告(', 'R', ')', 49], ['选项(', 'O', ')', 51], ['窗口(', 'W', ')', 53], ['帮助(', 'H', ')', 50],
];
const toggles = ['winTree', 'winGrid', 'winCap', 'winWave'];
const fields = [
  { name: '频率：', value: '100', unit: 'Hz' },
  { name: '占空比:', value: '50', unit: '%', off: true },
  { name: '振幅：', value: '10', unit: 'mVp' },
  { name: '偏置：', value: '0', unit: 'V' },
];
const message = 'Probes do not plot to the Grapher for interactive simulation. Connect an oscilloscope or run a transient simulation to see Grapher data.';

export default function App() {
  return (
    <Desktop>
      <Global />
      <Glyph width={0} height={0} style={{ position: 'absolute' }}>
        <defs>
          <linearGradient id="tile" x1="0" y1="0" x2="1" y2="1">
            <stop offset="0" stopColor="#3a9bf8" />
            <stop offset=".4" stopColor="#82c1fb" />
            <stop offset="1" stopColor="#cfe8ff" />
          </linearGradient>
        </defs>
      </Glyph>

      <MeetingBar>
        <MeetingArt $l={10} width={170} height={12} viewBox="10 0 170 12">
          <path d="M13 3l2-3M23 0v3" stroke="#777" strokeWidth="2" />
          <path d="M43 0v4M51 0v4M59 0v4" stroke="#ddd" strokeWidth="2.500" />
          <path d="M86.500 0v3q0 2 2 2h16q2 0 2-2V0" fill="none" stroke="#ccc" strokeWidth="2" />
          <path d="M130 0v4" stroke="#555" />
          <circle cx="163.500" cy="-4" r="11" fill="#b8b8b8" />
          <path d="M157 0l4 4M168 0l2 3M160 0h6" stroke="#444" />
        </MeetingArt>
        <MeetingText $l={4} $w={1080}>深圳信盈达-周工正在共享屏幕 ≡▾</MeetingText>
        <MeetingArt $l={7} width={28} height={6} viewBox="0 0 28 6">
          <path d="M1 0v3q0 1 1 1h19q1 0 1-1V0" fill="none" stroke="#ccc" strokeWidth="1.600" />
        </MeetingArt>
        <MeetingText $l={4} $w={138}>演讲者布局</MeetingText>
        <MeetingArt $l={0} width={22} height={6} viewBox="0 0 22 6">
          <path d="M2 0q0 5 4 4h3q2-2 4 0 4 1 5-4" fill="none" stroke="#ccc" strokeWidth="1.800" />
        </MeetingArt>
        <MeetingText $l={8} $w={60}>设置</MeetingText>
        <MeetingArt $l={0} width={22} height={6} viewBox="0 0 22 6">
          <path d="M2 0v4h6M15 4h7" fill="none" stroke="#ccc" strokeWidth="1.800" />
        </MeetingArt>
      </MeetingBar>

      <Frame>
        <TitleBar>
          <Glyph width={12} height={12} viewBox="0 0 12 12">
            <path d="M0 2h12M0 5h12M3 0v12M6 3v9M9 3v9" stroke="#4d3f86" strokeWidth="1.600" />
          </Glyph>
          <TitleText>共射级放大电路 - Multisim - [共射级放大电路 *]</TitleText>
          <TitleButtons width={150} height={16} viewBox="0 0 150 16">
            <path d="M38 7.500h11M87 4.500h7v8h-8V5M89 3h5q2 0 2 2v5.500M135 3l10 10M145 3l-10 10" fill="none" stroke="#222" strokeWidth="1.200" />
          </TitleButtons>
        </TitleBar>

        <MenuBar>
          <Icon n="schem" s={14} />
          <MenuItem $w={4} />
          {menus.map(([a, b, c, w]) => <MenuItem key={a} $w={w}>{a}<u>{b}</u>{c}</MenuItem>)}
          <MenuSpacer />
          <MdiButton $w={18}><Icon n="min" s={14} /></MdiButton>
          <MdiButton $w={19}><Icon n="restore" s={15} /></MdiButton>
          <MdiButton $w={20}><Icon n="close" s={15} /></MdiButton>
        </MenuBar>

        <ToolRow>
          <Cells w={92.8} items={['page', 'open', 'openBlue', 'save']} />
          <Divider $w={4} />
          <Cells w={46.2} items={['print', 'preview']} />
          <Divider $w={6} />
          <Cells w={21} items={['cut']} />
          <Divider $w={4} />
          <Cells w={17} items={['more']} />
          <Grip $w={5} />
          <ToolGroup $w={93}>
            {toggles.map((n, i) => <ToolCell key={n} $on={i < 2}><Icon n={n} /></ToolCell>)}
          </ToolGroup>
          <Cells w={48} items={['calc', 'treeGrey']} />
          <Divider $w={5} />
          <Cells w={46} items={['star', 'db']} />
          <Combo>--- 在用列表 ---<Glyph width={8} height={6} viewBox="0 0 8 6"><path d="M.5 1l3.500 3.500L7.500 1" fill="none" stroke="#666" /></Glyph></Combo>
          <Divider $w={5} />
          <Cells w={23} items={['check']} />
          <Cells w={29} items={['chipOut']} />
          <Cells w={4} items={['dot']} />
          <Cells w={25} items={['chipIn']} />
          <Cells w={27} items={['chipFwd']} />
          <Cells w={4} items={['dot']} />
          <Divider $w={6} />
          <Cells w={46} items={['find', 'help']} />
          <Grip $w={8} $edge />
          <Tiles w={230.5} items={['acSrc', 'dcSrc', 'gndA', 'gndD', 'ctl', 'ctl2', 'tVCC', 'tVDD', 'tVEE', 'tVSS']} />
          <Grip $w={6} $edge />
          <Tiles w={46} items={['dioH', 'dioV']} />
          <Grip $w={8} />
          <Cells w={116} items={['zoomIn', 'zoomOut', 'zoomArea', 'zoomFit', 'fullPage']} />
          <Grip $w={7} />
          <Tiles w={370} items={['cap', 'dia', 'coil', 'trafo', 'relay', 'mot1', 'mot2', 'mot3', 'resB', 'trafoBox', 'coupl', 'varRes', 'varCap', 'varCoil', 'pot', 'xtal']} />
        </ToolRow>

        <ToolRow>
          <Cells w={392} items={['gnd', 'res', 'diode', 'bjt', 'opamp', 'ttl', 'cmos', 'dig', 'mixed', 'ind', 'power', 'misc', 'periph', 'rf', 'motor', 'eagle', 'conn']} />
          <Divider $w={5} />
          <Cells w={22} items={['mcu']} />
          <Divider $w={5} />
          <Cells w={46} items={['hier', 'bus']} />
          <Grip $w={8} $edge />
          <Cells w={46} items={['play', 'pause']} />
          <ToolGroup $w={23}><ToolCell $on><Icon n="stop" /></ToolCell></ToolGroup>
          <Icon n="wrench" s={10} />
          <RunLabel>Interactive</RunLabel>
          <Grip $w={9} $edge />
          <ToolGroup $w={185}>
            {['V', 'A', 'W', '+V', 'AV', '-V', 'P'].map(t => <ToolCell key={t}><ProbeIcon t={t} /></ToolCell>)}
            <ToolCell><Icon n="gear" /></ToolCell>
          </ToolGroup>
          <Grip $w={9} $edge />
          <Tiles w={369.5} items={['npn', 'pnp', 'npn', 'pnp', 'jfet', 'jfet2', 'mos', 'mos', 'mos2', 'mos2', 'mos3', 'mos3', 'igbt', 'igbt', 'igbt2', 'igbt2']} />
          <Divider $w={3} />
        </ToolRow>

        <Work>
          <Side>
            <SideHead>
              <SideTitle>设计工具箱</SideTitle>
              <SmallButton><Icon n="up" s={11} /></SmallButton>
              <SmallButton><Icon n="close" s={10} /></SmallButton>
            </SideHead>
            <SideTools>
              <Icon n="pageYellow" /><Icon n="open" s={17} /><Icon n="save" /><Icon n="docs" s={17} />
            </SideTools>
            <Tree>
              <TreeRow $in={0}>计1</TreeRow>
              <TreeRow $in={3}>设计1</TreeRow>
              <TreeRow $in={-1}>射级放大电路</TreeRow>
              <TreeRow $in={3} $sel>共射级放大电路</TreeRow>
            </Tree>
            <SideScroll><Thumb $w={35} $h={2} /></SideScroll>
            <SideTabs>
              <SideTab $w={36}>层级</SideTab>
              <SideTab $w={30} $front>可见度</SideTab>
              <Scroller><Icon n="left" s={12} /></Scroller>
              <Scroller><Icon n="right" s={12} /></Scroller>
            </SideTabs>
          </Side>

          <Center>
            <SheetFrame>
              <SheetInner>
                <Schematic />
                <HScroll><Thumb $w={1052} $h={3} /></HScroll>
              </SheetInner>
              <VScroll><Thumb $w={2} $h={338} /></VScroll>
            </SheetFrame>
            <DocTabs>
              <DocTab $w={65}><Icon n="schem" s={17} />设计1 *</DocTab>
              <DocTab $w={121} $front><Icon n="schem" s={17} />共射级放大电路 *</DocTab>
              <TabsEnd><Icon n="cascade" s={14} /></TabsEnd>
            </DocTabs>
          </Center>

          <Instruments>
            <InstrumentCell>
              <Glyph width={17} height={16} viewBox="0 0 17 16">
                <path d="M4 2h9v13H4z" fill="#eee" stroke="#999" />
                <path d="M5 1h7v4H5z" fill="#0cc" /><path d="M7 3h4" stroke="#111" />
                <circle cx="8.500" cy="9" r="2.500" fill="#fff" stroke="#111" strokeWidth="1.300" />
                <path d="M1.500 5v10" stroke="#111" strokeWidth="2.500" /><path d="M1.500 1v4" stroke="#ec3" strokeWidth="2" />
                <path d="M15 4v11" stroke="#e11" strokeWidth="2.500" />
              </Glyph>
            </InstrumentCell>
            {meters.map((m, i) => <InstrumentCell key={i}><MeterIcon m={m} seed={i} /></InstrumentCell>)}
            <InstrumentCell $h={2} $line />
            <InstrumentCell $h={37} $line $top={7}><Icon n="labview" /><Icon n="dot" s={15} /></InstrumentCell>
            <InstrumentCell $h={37} $line $top={7}><Icon n="greyTool" /><Icon n="dot" s={15} /></InstrumentCell>
            <InstrumentCell $h={25} $line $top={2}><Icon n="redProbe" /></InstrumentCell>
          </Instruments>
        </Work>

        <Output>
          <OutputSide>
            <SmallButton $w={12} $h={12}><Icon n="close" s={10} /></SmallButton>
            <SmallButton $w={12} $h={13}><Icon n="rightGrey" s={11} /></SmallButton>
            <OutputCaption>表格视</OutputCaption>
          </OutputSide>
          <OutputList>
            <OutputLine>{message}</OutputLine>
            <OutputLine>{message}</OutputLine>
            <OutputLine>{message}</OutputLine>
          </OutputList>
          <OutputScroll><Thumb $w={3} $h={18} /></OutputScroll>
        </Output>
      </Frame>
      <Footer />

      <Dialog>
        <DialogHead>
          函数发生器-XFG1
          <Glyph width={11} height={11} viewBox="0 0 11 11"><path d="M.5.5l10 10M10.500.5l-10 10" stroke="#777" /></Glyph>
        </DialogHead>
        <Legend $h={17}>波形</Legend>
        <Waves>
          <WaveButton $on><Glyph width={48} height={8} viewBox="0 0 48 8"><path d="M0 5Q8-2 16 3.500T30 5 48 5M30 5" fill="none" stroke="none" /><path d="M0 5C6-.500 10-.500 16 4S26 8.500 32 4 42-.500 48 5" fill="none" stroke="#123" strokeWidth="1.200" /></Glyph></WaveButton>
          <WaveButton><Glyph width={48} height={8} viewBox="0 0 48 8"><path d="M0 7l10-5 10 5 10-5 11 5 7-3" fill="none" stroke="#222" strokeWidth="1.100" /></Glyph></WaveButton>
          <WaveButton><Glyph width={48} height={8} viewBox="0 0 48 8"><path d="M0 7h10V1h10v6h8V1h9v6h11" fill="none" stroke="#111" strokeWidth="1.300" /></Glyph></WaveButton>
        </Waves>
        <Legend $h={17}>信号选项</Legend>
        {fields.map(f => (
          <Field key={f.name}>
            <FieldName>{f.name}</FieldName>
            <FieldBox $w={87} $off={f.off} $pad={2}>{f.value}</FieldBox>
            <FieldBox $w={34} $off={f.off} $pad={f.unit === 'mVp' ? 1.5 : 5}>{f.unit}</FieldBox>
          </Field>
        ))}
        <RiseButton>设置上升/下降时间</RiseButton>
        <Rule />
        <Jacks>
          <Jack $w={20} $gap={46} $drop={7}>+<JackHole /></Jack>
          <Jack $w={36} $gap={49} $drop={3}>普通<JackHole /></Jack>
          <Jack $w={36} $gap={0} $drop={9}>–<JackHole $open /></Jack>
        </Jacks>
      </Dialog>
      <Pointer width={16} height={22} viewBox="0 0 16 22">
        <path d="M1 1v16l4-3.500 3 7 2.800-1.200-3-6.800H13z" fill="#fff" stroke="#444" />
      </Pointer>

      <Talking>
        <TalkMic>
          <Glyph width={18} height={20} viewBox="0 0 18 20">
            <rect x="6" y="2" width="6" height="10" rx="3" fill="#fff" />
            <path d="M3.500 9q0 5 5.500 5t5.500-5M9 14v3M6 17.500h6" stroke="#fff" fill="none" strokeWidth="1.500" />
            <path d="M1 17L17 3" stroke="#d8412f" strokeWidth="1.600" />
          </Glyph>
        </TalkMic>
        <TalkText>正在讲话:</TalkText>
        <Glyph width={40} height={24} viewBox="0 0 40 24">
          <path d="M1 14L14 1l8 9-12 13q-2 1-4-1l-5-6z" fill="#474b4d" /><path d="M14 1l8 9 5 5-7 8-7-8 4-5-5-6z" fill="#3b3f41" />
          <path d="M16 14L28 1l13 13v9l-8-6-7 6q-2 1-4-1z" fill="#54585a" />
        </Glyph>
      </Talking>

      <SharePill>
        <Glyph width={14} height={12} viewBox="0 0 14 12">
          <path d="M2 7v5" stroke="#eee" strokeWidth="2" /><path d="M7 4v8" stroke="#eee" strokeWidth="2" /><path d="M12 0v12" stroke="#777" strokeWidth="2" />
        </Glyph>
        <ShareText>您正在共享屏幕</ShareText>
        <StopShare>结束共享</StopShare>
      </SharePill>

      <FloatCard>
        <FloatTop>F<b>×</b></FloatTop>
        <FloatButton>开始</FloatButton>
      </FloatCard>

      <ExpandPill>
        <Glyph width={8} height={10} viewBox="0 0 8 10"><path d="M2 1l4 4-4 4" fill="none" stroke="#ddd" strokeWidth="1.400" /></Glyph>
      </ExpandPill>

      <Corner $x={24} $y={25} $w={126} $h={6} />
      <Corner $x={24} $y={25} $w={6} $h={126} />
      <Corner $x={1410} $y={25} $w={126} $h={6} />
      <Corner $x={1530} $y={25} $w={6} $h={126} />
      <Corner $x={24} $y={844} $w={6} $h={35} />
      <Corner $x={1530} $y={844} $w={6} $h={35} />
    </Desktop>
  );
}
